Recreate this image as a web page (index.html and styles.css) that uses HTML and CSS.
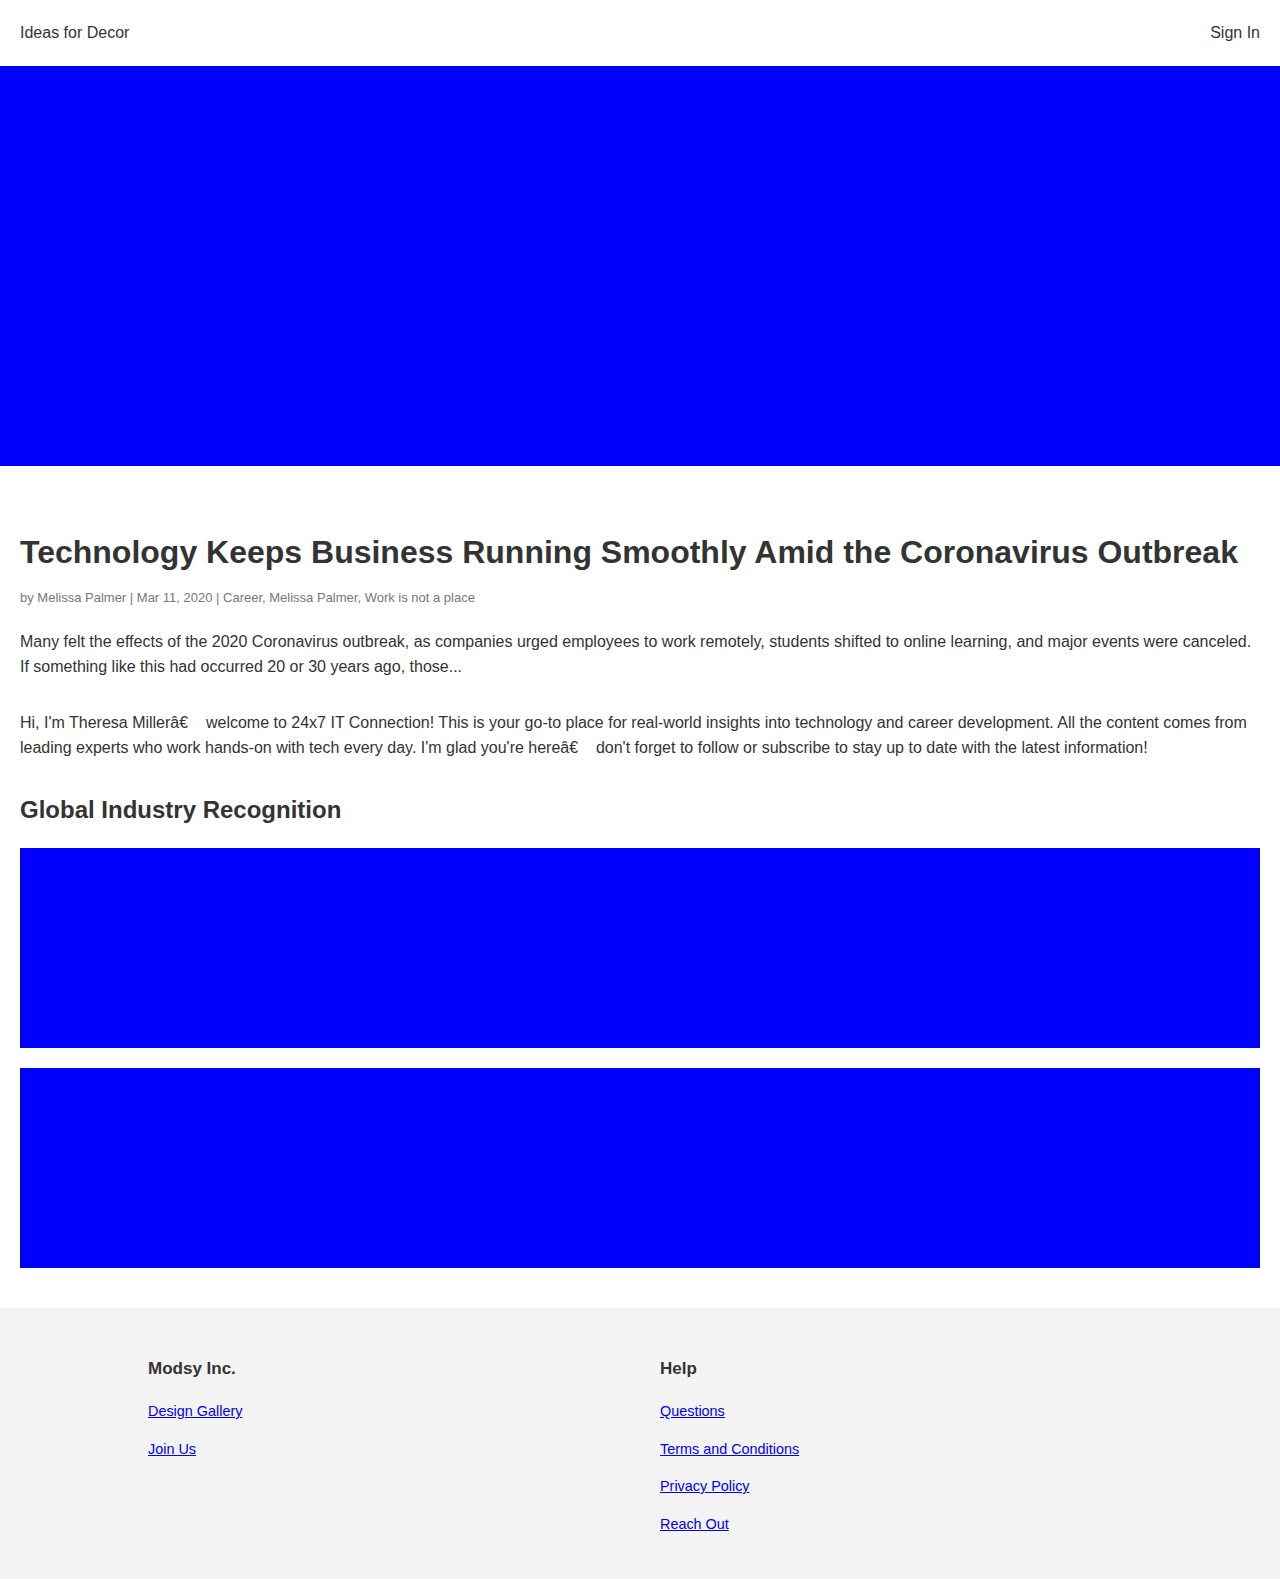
FILE: index.html
```html
<!DOCTYPE html>
<html lang="en">
<head>
<meta charset="utf-8">
<title>Ideas for Decor</title>
<link rel="stylesheet" href="styles.css">
</head>
<body>
<header class="site-header">
  <a class="brand" href="#">Ideas for Decor</a>
  <a class="signin" href="#">Sign In</a>
</header>
<div class="hero"></div>
<main class="article">
  <h1 class="title">Technology Keeps Business Running Smoothly Amid the Coronavirus Outbreak</h1>
  <p class="meta">by Melissa Palmer | Mar 11, 2020 | Career, Melissa Palmer, Work is not a place</p>
  <p class="lead">Many felt the effects of the 2020 Coronavirus outbreak, as companies urged employees to work remotely, students shifted to online learning, and major events were canceled. If something like this had occurred 20 or 30 years ago, those...</p>
  <p class="intro">Hi, I'm Theresa Millerâ€&nbsp;&nbsp;&nbsp; welcome to 24x7 IT Connection! This is your go-to place for real-world insights into technology and career development. All the content comes from leading experts who work hands-on with tech every day. I'm glad you're hereâ€&nbsp;&nbsp;&nbsp; don't forget to follow or subscribe to stay up to date with the latest information!</p>
  <h2 class="section-title">Global Industry Recognition</h2>
  <div class="awards">
    <div class="award"></div>
    <div class="award"></div>
  </div>
</main>
<footer class="site-footer">
  <div class="footer-inner">
    <div class="footer-col">
      <h3 class="footer-heading">Modsy Inc.</h3>
      <a class="footer-link" href="#">Design Gallery</a>
      <a class="footer-link" href="#">Join Us</a>
    </div>
    <div class="footer-col">
      <h3 class="footer-heading">Help</h3>
      <a class="footer-link" href="#">Questions</a>
      <a class="footer-link" href="#">Terms and Conditions</a>
      <a class="footer-link" href="#">Privacy Policy</a>
      <a class="footer-link" href="#">Reach Out</a>
    </div>
  </div>
</footer>
</body>
</html>
```
FILE: styles.css
```css
* { box-sizing: border-box; }
html, body { margin: 0; padding: 0; }
body {
  font-family: "Liberation Sans", Arial, sans-serif;
  color: #333;
  background: #fff;
}
.site-header {
  height: 66px;
  padding: 0 20px;
  display: flex;
  align-items: center;
  justify-content: space-between;
}
.brand, .signin {
  font-size: 16px;
  color: #333;
  text-decoration: none;
}
.hero {
  height: 400px;
  background: #0000ff;
}
.article {
  padding: 66px 20px 40px;
}
.title {
  font-size: 32px;
  font-weight: bold;
  line-height: 40px;
  margin: 0 0 18px;
}
.meta {
  font-size: 13px;
  line-height: 16px;
  color: #777;
  margin: 0 0 23px;
}
.lead, .intro {
  font-size: 16px;
  line-height: 25px;
  margin: 0 0 31px;
}
.intro { margin-bottom: 36px; }
.section-title {
  font-size: 24px;
  line-height: 28px;
  font-weight: bold;
  margin: 0 0 24px;
}
.awards {
  display: flex;
  flex-direction: column;
  gap: 20px;
}
.award {
  height: 200px;
  background: #0000ff;
}
.site-footer {
  background: #f3f3f3;
  padding: 51px 0 26px;
}
.footer-inner {
  max-width: 1024px;
  margin: 0 auto;
  display: grid;
  grid-template-columns: 1fr 1fr;
}
.footer-col {
  padding: 0 20px;
  display: flex;
  flex-direction: column;
  align-items: flex-start;
}
.footer-heading {
  font-size: 17px;
  line-height: 20px;
  font-weight: bold;
  margin: 0 0 24px;
}
.footer-link {
  font-size: 14.4px;
  line-height: 17.5px;
  color: #0000ee;
  margin-bottom: 20px;
}
```
